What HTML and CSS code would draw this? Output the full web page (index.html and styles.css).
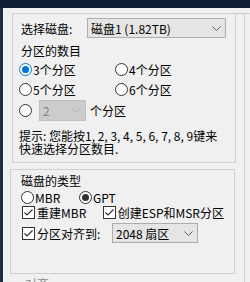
FILE: index.html
```html
<!DOCTYPE html>
<html lang="zh-CN">
<head>
  <meta charset="UTF-8" />
  <meta name="viewport" content="width=device-width, initial-scale=1.0"/>
  <title>分区设置</title>
  <link rel="stylesheet" href="styles.css">
</head>
<body>
  <div class="titlebar"></div>
  <div class="window">
    <div class="edge"></div>
    <div class="panel">
      <div class="groups">

        <!-- disk + partition count -->
        <div class="group disk-group">
          <div class="disk-row">
            <span class="disk-label">选择磁盘:</span>
            <div class="combo disk-combo">
              <span>磁盘1 (1.82TB)</span>
              <svg class="chevron" width="9" height="5" viewBox="0 0 9 5"><path d="M0.5 0.5 L4.5 4.5 L8.5 0.5" /></svg>
            </div>
          </div>

          <div class="caption">分区的数目</div>
          <div class="count-grid">
            <div class="opt"><span class="radio checked focus"></span>3个分区</div>
            <div class="opt"><span class="radio"></span>4个分区</div>
            <div class="opt"><span class="radio"></span>5个分区</div>
            <div class="opt"><span class="radio"></span>6个分区</div>
          </div>
          <div class="custom-row">
            <span class="radio"></span>
            <div class="combo count-combo disabled">
              <span>2</span>
              <svg class="chevron" width="9" height="5" viewBox="0 0 9 5"><path d="M0.5 0.5 L4.5 4.5 L8.5 0.5" /></svg>
            </div>
            <span class="custom-text">个分区</span>
          </div>

          <p class="hint">提示: 您能按1, 2, 3, 4, 5, 6, 7, 8, 9键来<br>快速选择分区数目.</p>
        </div>

        <!-- disk type -->
        <div class="group type-group">
          <div class="caption type-caption">磁盘的类型</div>
          <div class="type-row">
            <div class="opt mbr-opt"><span class="radio"></span>MBR</div>
            <div class="opt"><span class="radio checked"></span>GPT</div>
          </div>
          <div class="check-row">
            <div class="opt rebuild-opt">
              <svg class="checkbox" width="13" height="13" viewBox="0 0 13 13"><rect x="0.5" y="0.5" width="12" height="12" /><path d="M2.5 6.5 L5 9 L10.5 3.5" /></svg>重建MBR
            </div>
            <div class="opt">
              <svg class="checkbox" width="13" height="13" viewBox="0 0 13 13"><rect x="0.5" y="0.5" width="12" height="12" /><path d="M2.5 6.5 L5 9 L10.5 3.5" /></svg>创建ESP和MSR分区
            </div>
          </div>
          <div class="align-row">
            <div class="opt align-opt">
              <svg class="checkbox" width="13" height="13" viewBox="0 0 13 13"><rect x="0.5" y="0.5" width="12" height="12" /><path d="M2.5 6.5 L5 9 L10.5 3.5" /></svg>分区对齐到:
            </div>
            <div class="combo align-combo">
              <span>2048 扇区</span>
              <svg class="chevron" width="9" height="5" viewBox="0 0 9 5"><path d="M0.5 0.5 L4.5 4.5 L8.5 0.5" /></svg>
            </div>
          </div>
        </div>

        <div class="next-caption">对齐</div>
      </div>
      <div class="gutter"></div>
      <div class="side"></div>
    </div>
  </div>
</body>
</html>
```

FILE: styles.css
```css
body {
  margin: 0;
  height: 282px;
  overflow: hidden;
  background: #f0f0f0;
  font-family: "Noto Sans CJK SC", "Liberation Sans", sans-serif;
  font-size: 12px;
  color: #000;
}

.titlebar {
  height: 8px;
  background: #0f1f33;
}

.window {
  display: flex;
  height: 274px;
}

.edge {
  width: 3px;
  background: #1f2b38;
}

.panel {
  flex: 1;
  display: flex;
  padding-top: 5px;
}

.groups {
  margin-left: 7px;
  width: 226px;
}

.gutter {
  width: 8px;
  border-top: 1px solid #d0d0d0;
}

.side {
  flex: 1;
  border-left: 1px solid #d0d0d0;
  border-top: 1px solid #d0d0d0;
}

.group {
  box-sizing: border-box;
  border: 1px solid #d0d0d0;
}

.disk-group {
  margin-left: 2px;
  width: 224px;
  padding: 4px 6px 7px 6px;
}

.type-group {
  margin-top: 6px;
  width: 225px;
  padding: 3px 10px 30px 10px;
}

/* comboboxes */
.combo {
  box-sizing: border-box;
  display: flex;
  align-items: center;
  justify-content: space-between;
  height: 20px;
  padding: 0 4px 0 3px;
  background: #e5e5e5;
  border: 1px solid #adadad;
  white-space: nowrap;
}

.chevron {
  fill: none;
  stroke: #606060;
  stroke-width: 1;
}

.combo.disabled {
  background: #cccccc;
  border-color: #bfbfbf;
  color: #838383;
}

.combo.disabled .chevron {
  stroke: #b0b0b0;
}

.disk-row {
  display: flex;
  align-items: center;
  height: 20px;
}

.disk-label {
  width: 66px;
  margin-left: 2px;
}

.disk-combo {
  width: 139px;
}

.caption {
  margin: 5px 0 0 2px;
  line-height: 16px;
}

/* radio + checkbox options */
.opt {
  display: flex;
  align-items: center;
  gap: 1px;
  line-height: 13px;
  white-space: nowrap;
}

.radio {
  box-sizing: border-box;
  width: 13px;
  height: 13px;
  border: 1px solid #333;
  border-radius: 50%;
  background: #fff;
  position: relative;
}

.radio.checked::after {
  content: "";
  position: absolute;
  left: 2px;
  top: 2px;
  width: 7px;
  height: 7px;
  border-radius: 50%;
  background: #333;
}

.radio.focus {
  border-color: #0078d7;
}

.radio.focus::after {
  background: #0078d7;
}

.checkbox {
  margin-right: 1px;
}

.checkbox rect {
  fill: #fff;
  stroke: #333;
}

.checkbox path {
  fill: none;
  stroke: #333;
  stroke-width: 1.2;
}

.count-grid {
  display: grid;
  grid-template-columns: 96px auto;
  grid-auto-rows: 20px;
}

.custom-row {
  display: flex;
  align-items: center;
  height: 22px;
}

.count-combo {
  margin-left: 7px;
  width: 47px;
  height: 21px;
}

.custom-text {
  margin-left: 4px;
}

.hint {
  margin: 8px 0 0 0;
  line-height: 13px;
  white-space: nowrap;
}

.type-caption {
  margin: 0;
}

.type-row {
  display: flex;
  height: 17px;
  align-items: center;
}

.mbr-opt {
  width: 58px;
}

.check-row {
  display: flex;
  height: 13px;
  align-items: center;
  margin-left: 1px;
}

.rebuild-opt {
  width: 88px;
}

.align-row {
  display: flex;
  align-items: center;
  height: 20px;
  margin: 4px 0 0 1px;
}

.align-opt {
  width: 90px;
}

.align-combo {
  width: 86px;
}

.next-caption {
  margin: 2px 0 0 15px;
  line-height: 16px;
  color: #8c8c8c;
}
```
